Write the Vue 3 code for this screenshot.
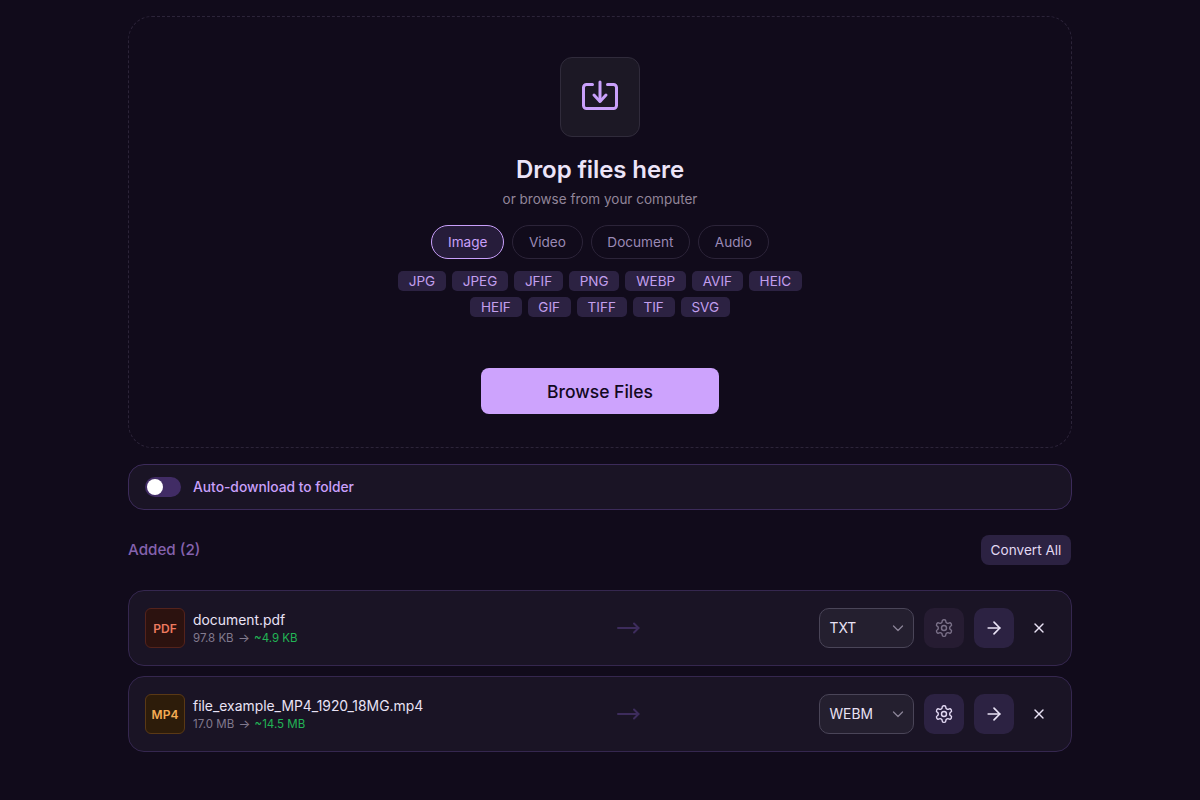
<script setup>
const groups = [
  { name: 'Image', active: true },
  { name: 'Video' },
  { name: 'Document' },
  { name: 'Audio' },
]
const row1 = ['JPG', 'JPEG', 'JFIF', 'PNG', 'WEBP', 'AVIF', 'HEIC']
const row2 = ['HEIF', 'GIF', 'TIFF', 'TIF', 'SVG']
const files = [
  { ext: 'PDF', kind: 'pdf', name: 'document.pdf', size: '97.8 KB', est: '~4.9 KB', fmt: 'TXT', dim: true },
  { ext: 'MP4', kind: 'mp4', name: 'file_example_MP4_1920_18MG.mp4', size: '17.0 MB', est: '~14.5 MB', fmt: 'WEBM', dim: false },
]
</script>

<template>
  <main class="page">
    <section class="drop">
      <div class="drop-icon">
        <svg width="40" height="40" viewBox="0 0 40 40" fill="none" stroke="currentColor" stroke-width="3" stroke-linecap="round" stroke-linejoin="round">
          <path d="M12.500 7.500H6.500A3 3 0 0 0 3.500 10.500V28.500A3 3 0 0 0 6.500 31.500H33.500A3 3 0 0 0 36.500 28.500V10.500A3 3 0 0 0 33.500 7.500H27.500" />
          <path d="M20 5V24" />
          <path d="M14 18L20 24.500L26 18" />
        </svg>
      </div>
      <h1 class="title">Drop files here</h1>
      <p class="sub">or browse from your computer</p>
      <div class="pills">
        <span v-for="g in groups" :key="g.name" class="pill" :class="{ active: g.active }">{{ g.name }}</span>
      </div>
      <div class="tags">
        <span v-for="t in row1" :key="t" class="tag">{{ t }}</span>
      </div>
      <div class="tags second">
        <span v-for="t in row2" :key="t" class="tag">{{ t }}</span>
      </div>
      <button class="browse">Browse Files</button>
    </section>

    <section class="auto">
      <span class="switch"><span class="knob"></span></span>
      <span class="auto-label">Auto-download to folder</span>
    </section>

    <header class="head">
      <h2 class="added">Added (2)</h2>
      <button class="convert-all">Convert All</button>
    </header>

    <ul class="list">
      <li v-for="f in files" :key="f.name" class="row">
        <div class="left">
          <span class="badge" :class="f.kind">{{ f.ext }}</span>
          <div class="meta">
            <div class="name">{{ f.name }}</div>
            <div class="size">{{ f.size }} <span class="to">→</span> <span class="est">{{ f.est }}</span></div>
          </div>
        </div>
        <svg class="mid-arrow" width="24" height="24" viewBox="0 0 24 24" fill="none" stroke="currentColor" stroke-width="2" stroke-linecap="round" stroke-linejoin="round">
          <path d="M2 12H22.500" />
          <path d="M18 7.500L22.500 12L18 16.500" />
        </svg>
        <div class="right">
          <div class="select">
            <span>{{ f.fmt }}</span>
            <svg width="12" height="12" viewBox="0 0 12 12" fill="none" stroke="currentColor" stroke-width="1.300" stroke-linecap="round" stroke-linejoin="round"><path d="M1.500 4L6 8.500L10.500 4" /></svg>
          </div>
          <button class="icon-btn gear" :class="{ dim: f.dim }">
            <svg width="20" height="20" viewBox="0 0 24 24" fill="none" stroke="currentColor" stroke-width="1.700" stroke-linecap="round" stroke-linejoin="round">
              <path d="M12.220 2h-.440a2 2 0 0 0-2 2v.180a2 2 0 0 1-1 1.730l-.430.250a2 2 0 0 1-2 0l-.150-.080a2 2 0 0 0-2.730.730l-.220.380a2 2 0 0 0 .730 2.730l.150.100a2 2 0 0 1 1 1.720v.510a2 2 0 0 1-1 1.740l-.150.090a2 2 0 0 0-.730 2.730l.220.380a2 2 0 0 0 2.730.730l.150-.080a2 2 0 0 1 2 0l.430.250a2 2 0 0 1 1 1.730V20a2 2 0 0 0 2 2h.440a2 2 0 0 0 2-2v-.180a2 2 0 0 1 1-1.730l.430-.250a2 2 0 0 1 2 0l.150.080a2 2 0 0 0 2.730-.730l.220-.390a2 2 0 0 0-.730-2.730l-.150-.080a2 2 0 0 1-1-1.740v-.500a2 2 0 0 1 1-1.740l.150-.090a2 2 0 0 0 .730-2.730l-.220-.380a2 2 0 0 0-2.730-.730l-.150.080a2 2 0 0 1-2 0l-.430-.250a2 2 0 0 1-1-1.730V4a2 2 0 0 0-2-2z" />
              <circle cx="12" cy="12" r="3" />
            </svg>
          </button>
          <button class="icon-btn go">
            <svg width="20" height="20" viewBox="0 0 24 24" fill="none" stroke="currentColor" stroke-width="2" stroke-linecap="round" stroke-linejoin="round">
              <path d="M5 12h14" />
              <path d="m12 5 7 7-7 7" />
            </svg>
          </button>
          <button class="icon-btn close">
            <svg width="16" height="16" viewBox="0 0 24 24" fill="none" stroke="currentColor" stroke-width="2" stroke-linecap="round" stroke-linejoin="round">
              <path d="M18 6 6 18" />
              <path d="m6 6 12 12" />
            </svg>
          </button>
        </div>
      </li>
    </ul>
  </main>
</template>

<style>
html, body { background: #110b1b; }
</style>

<style scoped>
* { box-sizing: border-box; }
.page {
  width: 944px;
  margin: 0 auto;
  padding-top: 16px;
  font-family: Inter, "Liberation Sans", sans-serif;
  color: #e9e2f5;
}
.drop {
  height: 432px;
  border: 1px dashed #2c2439;
  border-radius: 24px;
  padding-top: 40px;
  display: flex;
  flex-direction: column;
  align-items: center;
}
.drop-icon {
  width: 80px;
  height: 80px;
  border: 1px solid #302b3b;
  border-radius: 12px;
  background: #1c1825;
  color: #c9a0fb;
  display: flex;
  align-items: center;
  justify-content: center;
}
.title {
  margin: 17px 0 0;
  font-size: 24px;
  line-height: 32px;
  font-weight: 600;
  color: #ece4f8;
  letter-spacing: -0.1px;
}
.sub {
  margin: 3px 0 0;
  font-size: 13.500px;
  line-height: 20px;
  color: #918599;
}
.pills { margin-top: 16px; display: flex; gap: 8px; }
.pill {
  height: 34px;
  padding: 0 15.700px;
  border: 1px solid #2c2439;
  border-radius: 17px;
  font-size: 13.600px;
  line-height: 32px;
  color: #9a89b5;
}
.pill.active {
  border-color: #c9a0fb;
  background: #261c3a;
  color: #c9a0fb;
}
.tags { display: flex; gap: 6px; margin-top: 12px; }
.tags.second { margin-top: 6px; }
.tag {
  height: 20px;
  padding: 0 10.800px;
  border-radius: 5px;
  background: #2c2242;
  font-size: 13.500px;
  line-height: 20px;
  color: #c39fee;
}
.browse {
  margin-top: 51px;
  width: 238px;
  height: 46px;
  border: 0;
  border-radius: 8px;
  background: #cda3fd;
  color: #12091f;
  font: 500 17.500px Inter, "Liberation Sans", sans-serif;
}
.auto {
  margin-top: 16px;
  height: 46px;
  border: 1px solid #3c2b5a;
  border-radius: 16px;
  background: #1a1425;
  padding-left: 16px;
  display: flex;
  align-items: center;
  gap: 12px;
}
.switch {
  width: 36px;
  height: 20px;
  border-radius: 10px;
  background: #412c65;
  display: flex;
  align-items: center;
  padding-left: 2px;
}
.knob { width: 16px; height: 16px; border-radius: 50%; background: #fff; }
.auto-label { font-size: 13.800px; font-weight: 500; color: #c9a0fb; }
.head {
  margin-top: 25px;
  height: 30px;
  padding-right: 1px;
  display: flex;
  align-items: center;
  justify-content: space-between;
}
.added { margin: 0 0 2px; font-size: 15.200px; font-weight: 500; color: #8562ad; }
.convert-all {
  width: 90px;
  height: 30px;
  border: 0;
  border-radius: 8px;
  background: #2c2242;
  color: #e2d8f2;
  font: 400 13.600px Inter, "Liberation Sans", sans-serif;
  padding: 0;
}
.list { margin: 25px 0 0; padding: 0; list-style: none; display: flex; flex-direction: column; gap: 10px; }
.row {
  height: 76px;
  border: 1px solid #35274f;
  border-radius: 16px;
  background: #1a1425;
  padding: 0 16px;
  display: flex;
  align-items: center;
}
.left { flex: 1; display: flex; align-items: center; gap: 8px; }
.badge {
  width: 40px;
  height: 40px;
  border-radius: 6px;
  display: flex;
  align-items: center;
  justify-content: center;
  font-size: 12px;
  font-weight: 600;
}
.badge.pdf { background: #2c120f; border: 1px solid #54231c; color: #ef7a5f; }
.badge.mp4 { background: #2d1c0a; border: 1px solid #5a3915; color: #f5ac55; }
.meta { display: flex; flex-direction: column; }
.name { font-size: 13.900px; line-height: 18px; color: #e9e2f5; }
.size { font-size: 11.500px; line-height: 16px; padding-top: 1px; color: #827a8e; }
.to { margin: 0 1px; font-size: 12.500px; }
.est { color: #22b455; }
.mid-arrow { color: #3d2c5c; margin-right: 179px; }
.right { display: flex; align-items: center; gap: 10px; }
.select {
  width: 95.500px;
  height: 40px;
  border: 1px solid #4a4558;
  border-radius: 10px;
  background: #241f2f;
  padding: 0 9px 0 10px;
  display: flex;
  align-items: center;
  justify-content: space-between;
  font-size: 13.800px;
  color: #e9e2f5;
}
.select svg { color: #8a8296; }
.icon-btn {
  width: 40px;
  height: 40px;
  border: 0;
  border-radius: 10px;
  padding: 0;
  display: flex;
  align-items: center;
  justify-content: center;
  background: transparent;
}
.gear { background: #2c2242; color: #e2d8f2; }
.gear.dim { background: #261c32; color: #7a7088; }
.go { background: #2c2242; color: #e9e2f5; }
.close { width: 32px; color: #e9e2f5; margin-left: -1px; }
</style>
